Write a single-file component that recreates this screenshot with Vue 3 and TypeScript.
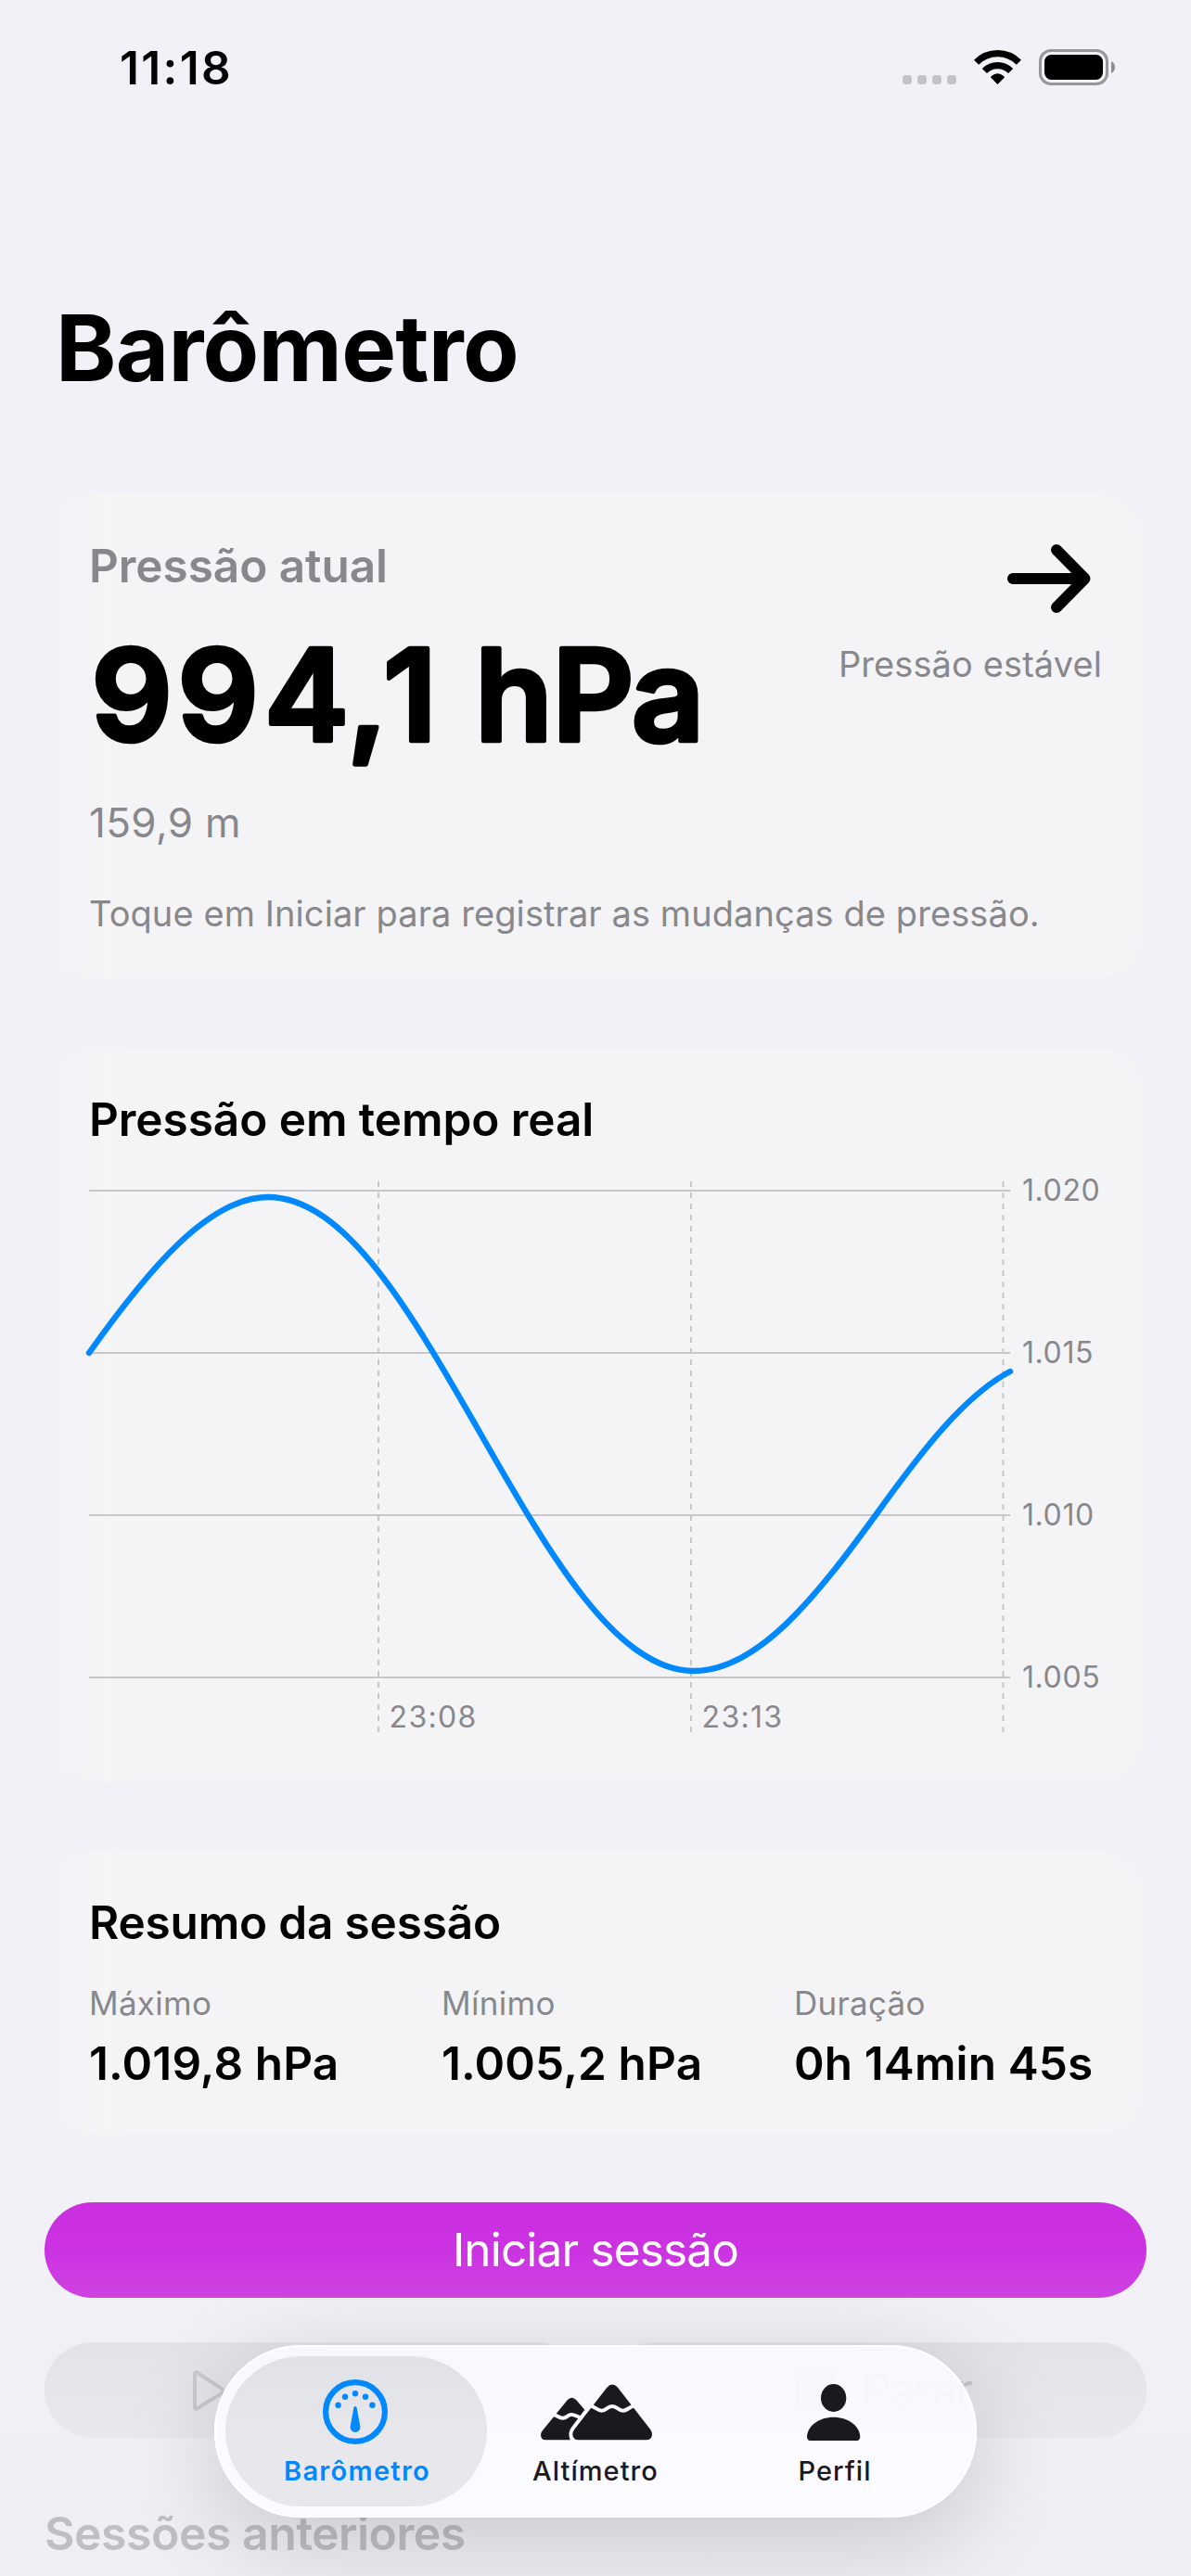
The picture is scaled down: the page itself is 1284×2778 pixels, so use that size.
<script setup lang="ts">
interface Stat {
  label: string
  value: string
}

const stats: Stat[] = [
  { label: 'Máximo', value: '1.019,8 hPa' },
  { label: 'Mínimo', value: '1.005,2 hPa' },
  { label: 'Duração', value: '0h 14min 45s' },
]

// Chart geometry: one horizontal line per 5 hPa, one vertical line per 5 minutes
const levels = ['1.020', '1.015', '1.010', '1.005'].map((label, i) => ({ label, y: 47 + i * 175 }))
const ticks = [
  { label: '23:08', x: 312 },
  { label: '23:13', x: 649 },
  { label: '', x: 985.5 },
]
const curve =
  'M0 222C64 132 129 54 193 54C276 54 347.3 178.4 422 309C496.7 440 569 565 652 565C722 565 786 482 848 397C899 326 944 268 993 242'
</script>

<template>
  <main class="screen">
    <header class="status">
      <span class="time">11:18</span>
      <div class="indicators">
        <svg class="cell" width="58" height="37" viewBox="0 0 58 37">
          <rect v-for="i in 4" :key="i" :x="(i - 1) * 16" y="27" width="10" height="10" rx="3.4" fill="#c4c3c8" />
        </svg>
        <svg width="51" height="37" viewBox="0 0 51 37">
          <g fill="none" stroke="#000" stroke-width="7.2">
            <path d="M2.6 13.3A32.1 32.1 0 0 1 48.4 13.3" />
            <path d="M11.4 22.6A19.6 19.6 0 0 1 39.6 22.6" />
          </g>
          <path d="M25.5 37L18.3 29.8Q17.8 29 18.6 28.2Q25.5 22.2 32.4 28.2Q33.2 29 32.7 29.8Z" />
        </svg>
        <svg width="82" height="39" viewBox="0 0 82 39">
          <rect x="1.5" y="1.5" width="72" height="36" rx="11.5" fill="none" stroke="#97979a" stroke-width="3" />
          <rect x="6" y="6" width="63" height="27" rx="7.5" />
          <path d="M78 13Q82 15 82 19.5Q82 24 78 26Z" fill="#8d8d90" />
        </svg>
      </div>
    </header>

    <h1>Barômetro</h1>

    <div class="content">
      <section class="card now">
        <div class="top">
          <div class="reading">
            <h2 class="muted">Pressão atual</h2>
            <svg class="big" width="700" height="220" viewBox="0 0 700 220">
              <text x="46 139 234.5 300 346 400 458 543.5 624" y="159">994,1 hPa</text>
            </svg>
          </div>
          <div class="trend">
            <svg width="90" height="74" viewBox="0 0 90 74">
              <path
                d="M6 37H83M53 6L83.5 37L53 68"
                fill="none"
                stroke="#000"
                stroke-width="12"
                stroke-linecap="round"
                stroke-linejoin="round"
              />
            </svg>
            <span>Pressão estável</span>
          </div>
        </div>
        <p class="altitude">159,9 m</p>
        <p class="hint">Toque em Iniciar para registrar as mudanças de pressão.</p>
      </section>

      <section class="card live">
        <h2>Pressão em tempo real</h2>
        <svg class="chart" width="1092" height="637" viewBox="0 0 1092 637">
          <g v-for="l in levels" :key="l.label">
            <path :d="`M0 ${l.y}H993`" stroke="#c7c7ca" stroke-width="2" />
            <text class="axis" x="1006" :y="l.y + 11">{{ l.label }}</text>
          </g>
          <g v-for="t in ticks" :key="t.x">
            <path :d="`M${t.x} 37V631`" stroke="#c7c7ca" stroke-width="2" stroke-dasharray="6 6" />
            <text v-if="t.label" class="axis wide" :x="t.x + 11.6" y="625.5">{{ t.label }}</text>
          </g>
          <path :d="curve" fill="none" stroke="#0088ff" stroke-width="6.4" stroke-linecap="round" />
        </svg>
      </section>

      <section class="card summary">
        <h2>Resumo da sessão</h2>
        <dl>
          <div v-for="s in stats" :key="s.label">
            <dt>{{ s.label }}</dt>
            <dd>{{ s.value }}</dd>
          </div>
        </dl>
      </section>

      <button class="start" type="button">Iniciar sessão</button>

      <div class="pair">
        <button class="ghost play" type="button">
          <svg width="38" height="46" viewBox="0 0 38 46">
            <path
              d="M4 5V41Q4 44 7 42L33 26Q36 23.5 33 21L7 4Q4 2 4 5Z"
              fill="none"
              stroke="#cac9ce"
              stroke-width="4"
              stroke-linejoin="round"
            />
          </svg>
        </button>
        <button class="ghost stop" type="button">
          <i></i>
          <span>Parar</span>
        </button>
      </div>

      <h3>Sessões anteriores</h3>
    </div>

    <nav class="tabs">
      <a class="tab active">
        <svg width="70" height="70" viewBox="-35 -35 70 70" fill="#0088ff">
          <circle r="31.9" fill="none" stroke="#0088ff" stroke-width="6.2" />
          <circle cx="-18.4" cy="-7.3" r="3.2" />
          <circle cx="-11" cy="-16.2" r="3.2" />
          <circle cy="-19.7" r="3.2" />
          <circle cx="11" cy="-16.2" r="3.2" />
          <circle cx="18.4" cy="-7.3" r="3.2" />
          <path d="M-1.6 -4.8Q0 -7.2 1.6 -4.8L5.3 15.5A5.4 5.4 0 1 1 -5.3 15.5Z" />
        </svg>
        <span>Barômetro</span>
      </a>
      <a class="tab">
        <svg class="peaks" width="126" height="64" viewBox="539 388 378 192">
          <g fill="#1a191e">
            <path d="M634 446Q648 430 663 446L690 477L648 533Q633 552 643 575H563Q548 574 548 558Q548 551 554 544Z" />
            <path d="M762 405Q779 386 797 405L902 540Q908 549 908 557Q907 574 891 575H668Q652 574 651 557Q651 548 657 540Z" />
          </g>
          <g fill="none" stroke="#f9f8fe" stroke-width="12">
            <path d="M584 492C604 494 604 504 619 504C633 504 634 493 647 493C660 493 664 500 682 504" />
            <path d="M704 464C728 468 730 480 745 480C761 480 762 466 779 466C796 466 798 480 814 480C830 480 832 466 856 464" />
          </g>
        </svg>
        <span>Altímetro</span>
      </a>
      <a class="tab">
        <svg class="person" width="57.3" height="61.3" viewBox="210 692 172 184" fill="#1a191e">
          <ellipse cx="296" cy="737" rx="41" ry="45" />
          <path d="M224 876Q210 875 210 862C212 826 250 799 296 799C342 799 380 826 382 862Q382 875 368 876Z" />
        </svg>
        <span>Perfil</span>
      </a>
    </nav>
  </main>
</template>

<style>
body {
  margin: 0;
  background: #f2f1f7;
}
</style>

<style scoped>
.screen {
  position: relative;
  box-sizing: border-box;
  width: 1284px;
  height: 2778px;
  overflow: hidden;
  background: linear-gradient(#f2f1f7 2350px, #efeef3 2778px);
  color: #000;
  font-family: Inter, 'Liberation Sans', sans-serif;
}

h1,
h2,
h3,
p,
dl,
dd {
  margin: 0;
}

.status {
  display: flex;
  align-items: center;
  justify-content: space-between;
  height: 60px;
  padding: 43px 82px 0 129px;
}

.time {
  font-size: 49.5px;
  line-height: 60px;
  font-weight: 600;
  letter-spacing: 2.36px;
}

.indicators {
  display: flex;
  align-items: center;
  gap: 19px;
  margin-bottom: 1px;
}

h1 {
  margin: 212px 0 96px 60px;
  font-size: 99px;
  line-height: 120px;
  font-weight: 700;
  letter-spacing: -0.76px;
}

.content {
  display: flex;
  flex-direction: column;
  padding: 0 48px;
}

.card {
  box-sizing: border-box;
  padding: 48px;
  border-radius: 54px;
  background: linear-gradient(90deg, #f2f1f7 8px, #f4f4f6 56px, #f5f5f5 66px, #f4f4f6 90px, #f4f4f6 1150px, #f3f3f6);
}

h2 {
  font-size: 49.5px;
  line-height: 60px;
  font-weight: 600;
  letter-spacing: -0.06px;
}

.muted {
  color: #88888c;
}

.now {
  height: 525px;
  padding-top: 49px;
}

.top {
  display: flex;
  justify-content: space-between;
}

.big {
  display: block;
  overflow: visible;
}

.big text {
  font-size: 137px;
  font-weight: 600;
  text-anchor: middle;
  fill: #000;
  stroke: #000;
  stroke-width: 4.6px;
  stroke-linejoin: round;
}

.trend {
  display: flex;
  flex-direction: column;
  align-items: flex-end;
  gap: 32px;
  padding-top: 7px;
  color: #88888c;
  font-size: 38px;
  line-height: 46px;
  letter-spacing: 0.1px;
}

.trend svg {
  margin-right: 12px;
}

.altitude {
  color: #88888c;
  font-size: 44px;
  line-height: 54px;
  letter-spacing: 0.36px;
}

.hint {
  margin-top: 48px;
  color: #88888c;
  font-size: 38px;
  line-height: 46px;
  letter-spacing: 0.08px;
  white-space: nowrap;
}

.live {
  height: 793px;
  margin-top: 73px;
}

.chart {
  display: block;
  overflow: visible;
}

.axis {
  fill: #88888c;
  font-size: 32px;
  letter-spacing: 0.6px;
}

.axis.wide {
  letter-spacing: 1.3px;
}

.summary {
  height: 309px;
  margin-top: 72px;
  padding-top: 49px;
}

.summary h2 {
  letter-spacing: -0.18px;
}

dl {
  display: grid;
  grid-template-columns: repeat(3, 1fr);
  gap: 48px;
  margin-top: 35px;
}

dt {
  color: #88888c;
  font-size: 35px;
  line-height: 44px;
  letter-spacing: 0.3px;
}

dd {
  margin-top: 13px;
  font-size: 49.5px;
  line-height: 60px;
  font-weight: 600;
  letter-spacing: 0.12px;
  white-space: nowrap;
}

button {
  box-sizing: border-box;
  height: 103px;
  margin: 0;
  border: 0;
  border-radius: 52px;
  font: 400 49.5px/103px Inter, 'Liberation Sans', sans-serif;
}

.start {
  position: relative;
  z-index: 3;
  margin-top: 72px;
  padding: 0;
  background: linear-gradient(#cb30e0 0, #cb32e1 45%, #ce42e1);
  color: #fff;
  letter-spacing: -0.83px;
}

.pair {
  display: grid;
  grid-template-columns: 1fr 1fr;
  gap: 24px;
  margin-top: 48px;
}

.ghost {
  display: flex;
  align-items: center;
  background: linear-gradient(#e2e2e7, #e9e8ed);
  color: #c6c5ca;
}

.play {
  padding: 0 0 0 158px;
}

.stop {
  gap: 30px;
  padding: 0 0 0 204px;
  letter-spacing: -1.2px;
}

.stop i {
  width: 41px;
  height: 42px;
  border-radius: 4px;
  background: #c6c5ca;
}

h3 {
  margin-top: 73px;
  color: #bfbfc2;
  font-size: 50px;
  line-height: 60px;
  font-weight: 600;
  letter-spacing: -0.5px;
}

.tabs {
  position: absolute;
  z-index: 2;
  left: 231px;
  top: 2529px;
  display: flex;
  box-sizing: border-box;
  width: 822px;
  height: 186px;
  padding: 12px;
  border-radius: 93px;
  background: linear-gradient(rgba(250, 249, 255, 0.92), rgba(252, 251, 255, 0.95) 60%);
  box-shadow:
    inset 0 0 0 2px #fff,
    0 24px 100px rgba(0, 0, 0, 0.17);
}

.tab {
  display: flex;
  flex: none;
  flex-direction: column;
  align-items: center;
  box-sizing: border-box;
  width: 282px;
  height: 162px;
  padding-top: 25px;
  border-radius: 81px;
  color: #1a191e;
  font-size: 29px;
  line-height: 36px;
  font-weight: 500;
  letter-spacing: 1.05px;
}

.tab + .tab {
  margin-left: -24px;
}

.tab.active {
  background: linear-gradient(#e0e2e7, #e8e7ec 60%);
  color: #0088ff;
  font-weight: 600;
  letter-spacing: 1.3px;
}

.tab.active svg {
  margin-right: 3px;
}

.tab span {
  margin-top: 11px;
}

.tab.active span {
  padding-left: 2px;
}

.tab .peaks {
  margin-top: 3px;
  margin-bottom: 3px;
  margin-left: 1px;
}

.tab .person {
  margin-top: 5px;
  margin-bottom: 3.7px;
  margin-right: 2px;
}
</style>
